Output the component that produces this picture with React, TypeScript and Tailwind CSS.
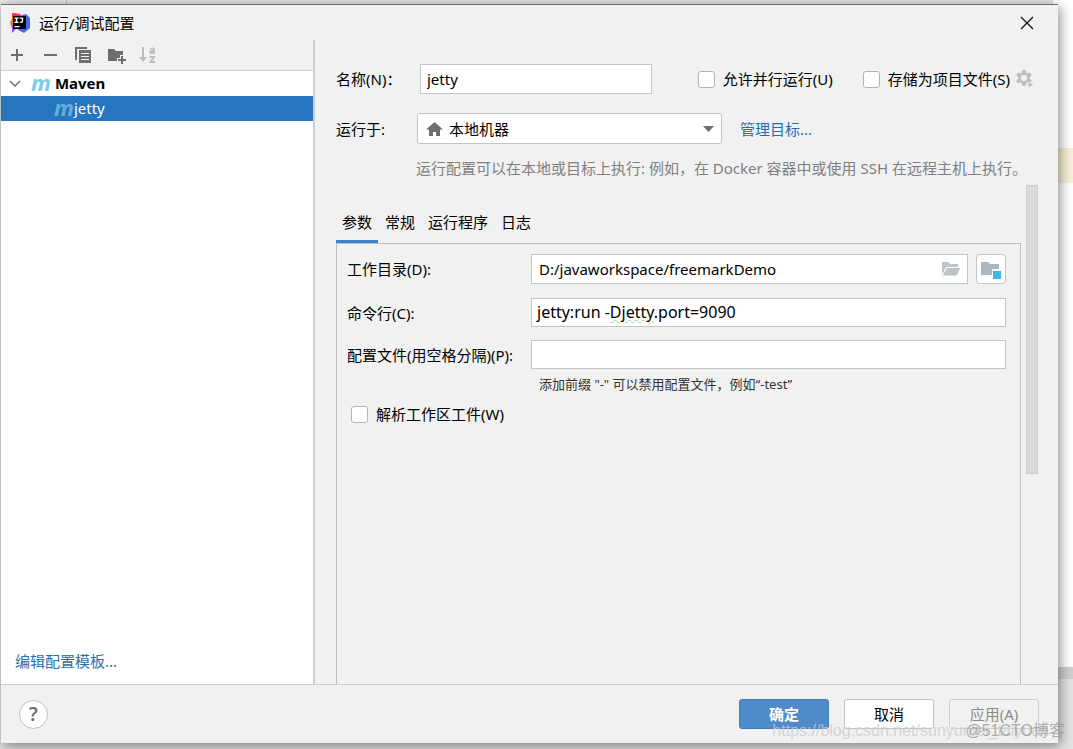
import { useState } from "react";
import type { ReactNode } from "react";

function AppLogo() {
  return (
    <svg className="h-5 w-5 shrink-0" viewBox="0 0 20 20" aria-hidden="true">
      <defs>
        <linearGradient id="logo-left" x1="0" y1="0" x2="0" y2="1">
          <stop offset="0" stopColor="#fe315d" />
          <stop offset="0.45" stopColor="#f97a12" />
          <stop offset="0.7" stopColor="#b74af7" />
          <stop offset="1" stopColor="#8a3ff0" />
        </linearGradient>
        <linearGradient id="logo-right" x1="0" y1="0" x2="1" y2="1">
          <stop offset="0" stopColor="#6b57ff" />
          <stop offset="1" stopColor="#2f6fe4" />
        </linearGradient>
      </defs>
      <path d="M12 2l4-1 4 4v10l-6 5-6-3z" fill="url(#logo-right)" />
      <path d="M2 0l8 1 3 9-7 6-4 4v-5l-1-2-1-4 2-3z" fill="url(#logo-left)" />
      <path d="M2 0l8 1 4 4-10 1z" fill="#fe315d" />
      <rect x="3" y="3" width="13" height="13" fill="#000" />
      <path d="M4.500 4.500h4v1.300H7.300v2.900h1.200V10h-4V8.700h1.200V5.800H4.500zM9.500 4.500h3.700v3.600q0 2-1.900 2-1.100 0-1.800-.8l.8-1q.4.500.9.500.6 0 .6-.8V5.800H9.500zM4.500 13h5v1.200h-5z" fill="#fff" />
    </svg>
  );
}

function CopyIcon() {
  return (
    <svg className="h-4 w-4" viewBox="0 0 16 16" fill="#6e6e6e" aria-hidden="true">
      <path d="M0 0h12v2H2v11H0z" />
      <path fillRule="evenodd" d="M4 3h12v13H4zM6 6v1h8V6zM6 9v1h8V9zM6 12v1h8v-1z" />
    </svg>
  );
}

function NewFolderIcon() {
  return (
    <svg className="h-[17px] w-[18px]" viewBox="0 0 18 17" fill="#6e6e6e" aria-hidden="true">
      <path d="M0 2h6l2 2h7v4h-3v3H9v3H0z" />
      <path d="M13 9h2v3h3v2h-3v3h-2v-3h-3v-2h3z" />
    </svg>
  );
}

function SortIcon() {
  return (
    <svg className="h-4 w-[17px]" viewBox="0 0 17 16" fill="none" stroke="#bdbdbd" aria-hidden="true">
      <path d="M4 0v12" strokeWidth="2" />
      <path d="M0 10h8l-4 5z" fill="#bdbdbd" stroke="none" />
      <path d="M11 1.800q4-1.200 4 1V7m0-3.200q-4-.2-4 1.500t4 .2" strokeWidth="1.800" />
      <path d="M10.500 9.800h4.500L11.500 15H16" strokeWidth="1.800" />
    </svg>
  );
}

function GearIcon() {
  return (
    <svg className="h-[18px] w-[18px]" viewBox="0 0 18 18" fill="#bfbfbf" aria-hidden="true">
      <path fillRule="evenodd" d="M6.200 0h3.600l.4 2.400 1.600.9 2.300-.9 1.800 3-1.900 1.600v1.900l1.900 1.600-1.800 3-2.300-.9-1.600.9-.4 2.400H6.200l-.4-2.400-1.600-.9-2.300.9-1.800-3L2 8.900V7L.1 5.400l1.800-3 2.300.9 1.600-.9zM8 5a3 3 0 100 6 3 3 0 000-6z" />
      <path d="M10 13h8l-4 5z" stroke="#f1f1f1" />
    </svg>
  );
}

function HomeIcon() {
  return (
    <svg className="h-4 w-[17px]" viewBox="0 0 17 16" fill="#6e6e6e" aria-hidden="true">
      <path d="M8.500 1L17 8.500h-3V15h-4v-4H7v4H3V8.500H0z" />
    </svg>
  );
}

function OpenFolderIcon() {
  return (
    <svg className="h-4 w-5" viewBox="0 0 20 16" aria-hidden="true">
      <path d="M1 14V1h6l2 2h8v3H5z" fill="#bcc2c5" />
      <path d="M5.500 6.500H20L16 15H1z" fill="#bcc2c5" stroke="#fff" />
    </svg>
  );
}

function ModuleFolderIcon() {
  return (
    <svg className="h-5 w-5" viewBox="0 0 20 20" aria-hidden="true">
      <path d="M0 3h7l2 2h9v5h-7v6H0z" fill="#adb8be" />
      <path d="M12 12h8v8h-8z" fill="#40b6e0" />
    </svg>
  );
}

function MavenMark({ dim = false }: { dim?: boolean }) {
  return (
    <span
      aria-hidden="true"
      className={
        dim
          ? "pb-[2px] font-['Open_Sans',sans-serif] text-[22px] leading-5 font-bold text-[#5fb2d6] italic"
          : "pb-[2px] font-['Open_Sans',sans-serif] text-[22px] leading-5 font-bold text-[#7bcbea] italic"
      }
    >
      m
    </span>
  );
}

function CheckOption({ label, children }: { label: string; children?: ReactNode }) {
  return (
    <div className="flex items-center gap-[6px]">
      <label className="flex items-center gap-2 whitespace-nowrap">
        <input
          type="checkbox"
          className="h-[17px] w-[17px] shrink-0 appearance-none rounded-[3px] border border-[#b3b3b3] bg-white checked:bg-[#4a88c7]"
        />
        {label}
      </label>
      {children}
    </div>
  );
}

const tabs = ["参数", "常规", "运行程序", "日志"];

export default function App() {
  const [activeTab, setActiveTab] = useState("参数");

  return (
    <div className="relative flex h-screen flex-col overflow-hidden bg-[#e4e4e4] pt-1 pr-[15px] pb-[6px] pl-px font-['Noto_Sans','Noto_Sans_CJK_SC',sans-serif] text-[15px] leading-5 text-black">
      {/* editor window that shows past the edges of the dialog */}
      <div aria-hidden="true" className="absolute top-0 left-0 h-1 w-[67px] border-r border-[#b8b8b8]" />
      <div aria-hidden="true" className="absolute top-0 right-0 bottom-[70px] flex w-5 flex-col bg-white">
        <div className="mt-[148px] h-[35px] bg-[#f8f0d8]" />
        <div className="mt-auto h-3 bg-[#d0d0d0]" />
      </div>

      <main className="relative flex min-h-0 flex-1 flex-col border-t border-[#707070] bg-[#f1f1f1] shadow-[2px_3px_12px_rgba(0,0,0,0.45)]">
        <header className="flex h-[35px] shrink-0 items-center gap-[9px] pr-5 pl-[9px]">
          <AppLogo />
          <h1>运行/调试配置</h1>
          <button type="button" aria-label="关闭" className="ml-auto p-1">
            <svg className="h-[14px] w-[14px]" viewBox="0 0 14 14" stroke="#111" strokeWidth="1.300" aria-hidden="true">
              <path d="M1 1l12 12M13 1L1 13" />
            </svg>
          </button>
        </header>

        <div className="flex min-h-0 flex-1">
          <aside className="flex w-[314px] shrink-0 flex-col border-r-2 border-[#cdcdcd]">
            <div className="flex h-[31px] shrink-0 items-center gap-[17px] border-b border-[#cdcdcd] pl-2">
              <button type="button" aria-label="添加">
                <svg className="h-4 w-4" viewBox="0 0 16 16" stroke="#6e6e6e" strokeWidth="2" aria-hidden="true">
                  <path d="M8 2v12M2 8h12" />
                </svg>
              </button>
              <button type="button" aria-label="移除">
                <svg className="h-4 w-4" viewBox="0 0 16 16" stroke="#6e6e6e" strokeWidth="2" aria-hidden="true">
                  <path d="M2 8h13" />
                </svg>
              </button>
              <button type="button" aria-label="复制"><CopyIcon /></button>
              <button type="button" aria-label="新建文件夹"><NewFolderIcon /></button>
              <button type="button" aria-label="排序" disabled className="-ml-1"><SortIcon /></button>
            </div>
            <div className="flex min-h-0 flex-1 flex-col bg-white">
              <div className="flex h-[25px] items-center pb-[2px] pl-2">
                <svg className="mr-[10px] h-3 w-3" viewBox="0 0 12 12" fill="none" stroke="#6e6e6e" strokeWidth="1.500" aria-hidden="true">
                  <path d="M1 4l5 5 5-5" />
                </svg>
                <MavenMark />
                <span className="ml-1 font-bold">Maven</span>
              </div>
              <div className="flex h-[25px] items-center bg-[#2675bf] pb-[2px] pl-[53px] text-white">
                <MavenMark dim />
                <span>jetty</span>
              </div>
              <a href="#templates" className="mt-auto mb-[13px] self-start pl-[14px] text-[#2470b3]">编辑配置模板...</a>
            </div>
          </aside>

          <section className="flex min-w-0 flex-1 flex-col pr-5 pl-[21px]">
            <div className="mt-6 flex h-[30px] items-center">
              <label htmlFor="name" className="w-[84px] shrink-0">名称(N)：</label>
              <input id="name" defaultValue="jetty" className="h-[30px] w-[232px] border border-[#c4c4c4] bg-white px-[6px]" />
              <div className="mr-1 ml-auto flex items-center gap-[30px]">
                <CheckOption label="允许并行运行(U)" />
                <CheckOption label="存储为项目文件(S)">
                  <button type="button" aria-label="存储选项"><GearIcon /></button>
                </CheckOption>
              </div>
            </div>

            <div className="mt-[19px] flex h-[31px] items-center">
              <label htmlFor="target" className="w-[81px] shrink-0">运行于:</label>
              <div className="grid h-[31px] w-[305px] items-center">
                <select id="target" className="col-start-1 row-start-1 h-[31px] w-full appearance-none rounded-[3px] border border-[#c4c4c4] bg-white pl-[31px]">
                  <option>本地机器</option>
                </select>
                <div className="pointer-events-none col-start-1 row-start-1 flex items-center justify-between pr-2 pl-[9px]">
                  <HomeIcon />
                  <svg className="h-[6px] w-[11px]" viewBox="0 0 11 6" fill="#6e6e6e" aria-hidden="true">
                    <path d="M0 0h11L5.500 6z" />
                  </svg>
                </div>
              </div>
              <a href="#targets" className="ml-[18px] text-[#2470b3]">管理目标...</a>
            </div>
            <p className="mt-[14px] ml-20 whitespace-nowrap text-[#808080]">
              运行配置可以在本地或目标上执行: 例如，在 Docker 容器中或使用 SSH 在远程主机上执行。
            </p>

            <div className="mt-[7px] flex min-h-0 flex-1 gap-[5px]">
              <div className="flex min-w-0 flex-1 flex-col pt-[23px]">
                <div role="tablist" className="flex h-9 gap-px">
                  {tabs.map((tab) => (
                    <button
                      key={tab}
                      type="button"
                      role="tab"
                      aria-selected={tab === activeTab}
                      onClick={() => setActiveTab(tab)}
                      className={
                        tab === activeTab
                          ? "border-b-4 border-[#4083c9] px-[6px] pb-1"
                          : "border-b-4 border-transparent px-[6px] pb-1"
                      }
                    >
                      {tab}
                    </button>
                  ))}
                </div>
                <div role="tabpanel" className="-mt-px flex-1 border border-b-0 border-[#bcbcbc] pt-[10px] pr-[14px] pl-[10px]">
                  <div className="flex items-center">
                    <label htmlFor="workdir" className="w-[184px] shrink-0">工作目录(D):</label>
                    <div className="flex h-[30px] min-w-0 flex-1 items-center border border-[#c4c4c4] bg-white pr-[6px]">
                      <input id="workdir" defaultValue="D:/javaworkspace/freemarkDemo" className="min-w-0 flex-1 pl-[7px]" />
                      <button type="button" aria-label="浏览"><OpenFolderIcon /></button>
                    </div>
                    <button type="button" aria-label="选择模块" className="ml-2 flex h-[30px] w-[30px] items-center justify-center rounded-[4px] border border-[#c4c4c4] bg-white">
                      <ModuleFolderIcon />
                    </button>
                  </div>
                  <div className="mt-[14px] flex items-center">
                    <span id="command-label" className="w-[184px] shrink-0">命令行(C):</span>
                    <div
                      role="textbox"
                      aria-labelledby="command-label"
                      contentEditable
                      suppressContentEditableWarning
                      className="h-[29px] min-w-0 flex-1 border border-[#c4c4c4] bg-white px-[5px] text-[16px] leading-[27px]"
                    >
                      jetty:run -<span className="underline decoration-[#a5cfa5] decoration-wavy decoration-1">Djetty</span>.port=9090
                    </div>
                  </div>
                  <div className="mt-[13px] flex items-center">
                    <label htmlFor="profiles" className="w-[184px] shrink-0">配置文件(用空格分隔)(P):</label>
                    <input id="profiles" className="h-[29px] min-w-0 flex-1 border border-[#c4c4c4] bg-white px-[5px]" />
                  </div>
                  <p className="mt-[5px] mb-[10px] ml-48 text-[13px] text-[#333]">添加前缀 "-" 可以禁用配置文件，例如“-test”</p>
                  <div className="pl-1">
                    <CheckOption label="解析工作区工件(W)" />
                  </div>
                </div>
              </div>
              <div aria-hidden="true" className="h-[289px] w-3 shrink-0 border border-[#cdcdcd] bg-[#d9d9d9]" />
            </div>
          </section>
        </div>

        <footer className="flex h-[59px] shrink-0 items-center gap-[15px] border-t border-[#cdcdcd] pr-[19px] pl-[18px]">
          <button type="button" aria-label="帮助" className="mr-auto h-[29px] w-[29px] rounded-full border border-[#c0c0c0] bg-white text-[19px] font-semibold text-[#6e6e6e]">?</button>
          <button type="button" className="h-[30px] w-[90px] rounded-[3px] border border-[#3f7cbd] bg-[#4f8bc9] font-bold text-white">确定</button>
          <button type="button" className="h-[30px] w-[90px] rounded-[3px] border border-[#c0c0c0] bg-white">取消</button>
          <button type="button" disabled className="h-[30px] w-[90px] rounded-[3px] border border-[#cfcfcf] text-[#8c8c8c]">应用(A)</button>
        </footer>
      </main>

      <div className="pointer-events-none absolute right-2 bottom-2 font-['Liberation_Sans','Noto_Sans_CJK_SC',sans-serif] text-[16px]">
        <span className="absolute right-4 bottom-0 text-[#cccccc]/80">https://blog.csdn.net/sunyunfei_taiyuan</span>
        <span className="relative text-[#999]/80">@51CTO博客</span>
      </div>
    </div>
  );
}
